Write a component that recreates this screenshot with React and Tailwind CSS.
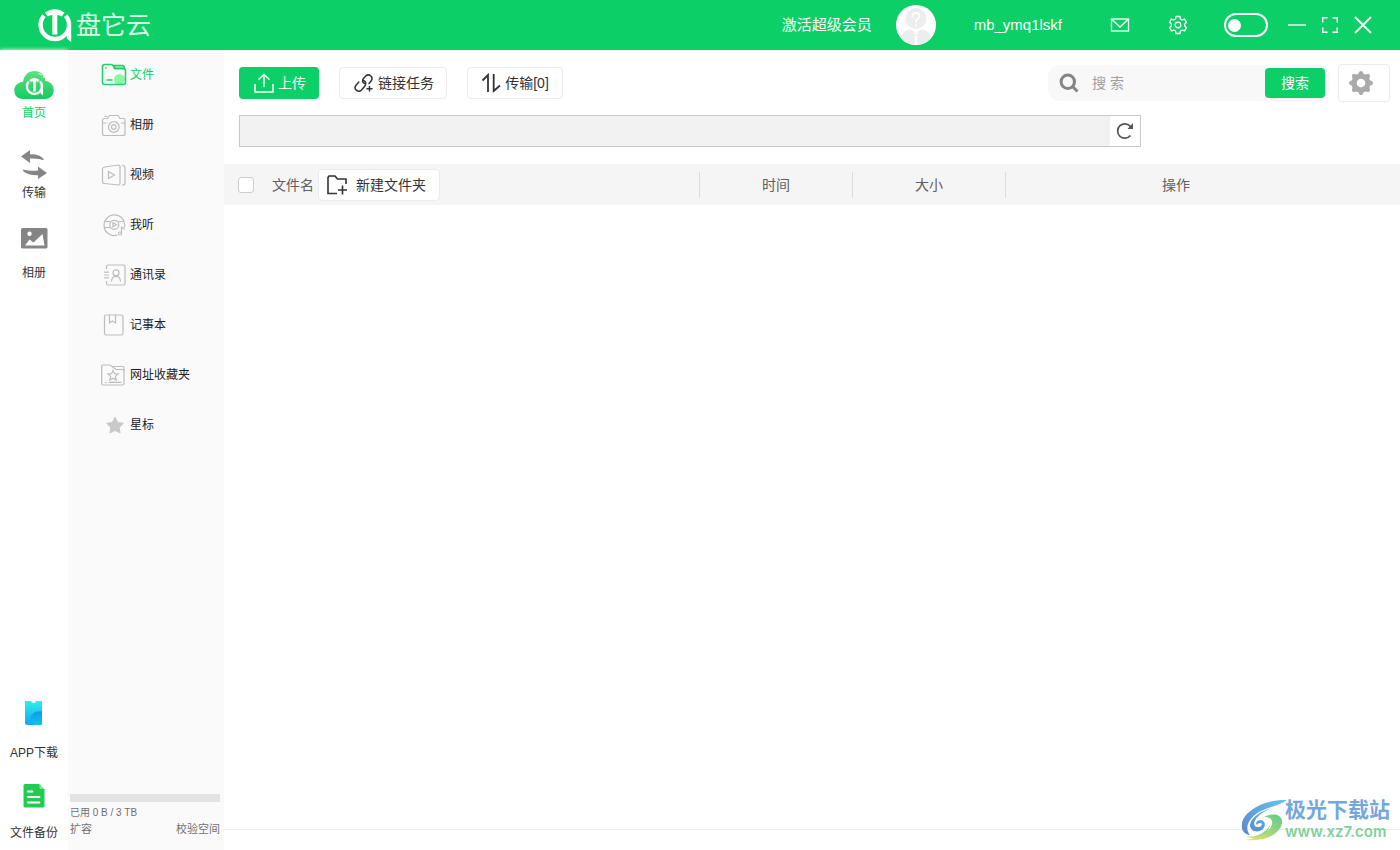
import { useState } from "react";

function LogoMark({ ...props }) {
    return (
        <svg viewBox="0 0 34 34" fill="none" stroke="currentColor" strokeWidth="4.4" aria-hidden="true" {...props}>
            <path d="M6 7.6A14.2 14.2 0 1 0 27.6 7.6" />
            <path d="M7 4.6Q16.8 -2.6 26.6 4.6L23.8 8.6Q21.6 7.2 19.3 6.9V26.5H14.3V6.9Q12 7.2 9.8 8.6Z" fill="currentColor" stroke="none" />
            <path d="M33.2 17V34L28.8 30.4V22Z" fill="currentColor" stroke="none" />
        </svg>
    );
}

const homeIcon = (
    <svg viewBox="0 0 40 40" className="h-10 w-10">
        <defs>
            <linearGradient id="cloud" x1="0" y1="0" x2="0" y2="1">
                <stop offset="0" stopColor="#5fe07c" />
                <stop offset="1" stopColor="#12cc62" />
            </linearGradient>
        </defs>
        <path d="M9.5 34C4 34 0.3 30.5 0.3 25.5C0.3 20.5 4 17.5 9 16.8C10 10 14.5 6 20.5 6C26.5 6 30.5 10 31.5 16C36 16.5 39.7 20 39.7 25C39.7 30.5 36 34 31 34Z" fill="url(#cloud)" />
        <path d="M24.5 8.3Q28 9.5 30 13" stroke="#b9f3c6" strokeWidth="1.3" fill="none" strokeDasharray="4 1.5" />
        <LogoMark x="11.5" y="12.5" width="18" height="18" color="#fff" />
    </svg>
);

const transferIcon = (
    <svg viewBox="0 0 40 40" className="h-10 w-10" fill="#858585">
        <path d="M7 11.5L16 5V9.3Q26 9 30 14.5L29 15.3Q25 13.2 16 13.6V18Z" />
        <path d="M33 28L24 21.5V25.5Q15 26.5 9.5 24.5L9 26Q14 30.5 24 30.2V34Z" />
    </svg>
);

const albumIcon = (
    <svg viewBox="0 0 40 40" className="h-10 w-10">
        <rect x="7" y="3" width="26.5" height="20.5" rx="1.5" fill="#858585" />
        <circle cx="15.5" cy="8.7" r="2.2" fill="#fff" />
        <path d="M11 20.5L15.5 14.5L19.5 17.5L28.5 9L30.5 20.5Z" fill="#fff" />
    </svg>
);

const phoneIcon = (
    <svg viewBox="0 0 40 40" className="h-10 w-10">
        <defs>
            <linearGradient id="phone" x1="0" y1="0" x2="0" y2="1">
                <stop offset="0" stopColor="#2bf0e6" />
                <stop offset="1" stopColor="#12a6f8" />
            </linearGradient>
            <linearGradient id="drop" x1="0" y1="0" x2="0" y2="1">
                <stop offset="0" stopColor="#0d9bea" />
                <stop offset="1" stopColor="#10c4e8" />
            </linearGradient>
        </defs>
        <path d="M11 8H17Q17.5 10 20 10Q21.5 10 22 8H28V30.5Q28 32 26.5 32H13Q11 32 11 30Z" fill="url(#phone)" />
        <path d="M28 18.3C21 17.5 16.5 21 16.5 25.5C16.5 28.5 18 30.5 20.5 32H26.5Q28 32 28 30.5Z" fill="url(#drop)" />
    </svg>
);

const backupIcon = (
    <svg viewBox="0 0 40 40" className="h-10 w-10">
        <path d="M11 11H25L30.5 16.5V33Q30.5 34.5 29 34.5H11Q9.5 34.5 9.5 33V12.5Q9.5 11 11 11Z" fill="#22cc52" />
        <path d="M25.5 11L30.5 16H26.5Q25.5 16 25.5 15Z" fill="#7fe79b" />
        <path d="M14 18.5H18.5M14 24H25.5M14 29.5H25.5" stroke="#fff" strokeWidth="1.8" strokeLinecap="round" />
    </svg>
);

const railTop = [
    { label: "首页", icon: homeIcon, active: true },
    { label: "传输", icon: transferIcon },
    { label: "相册", icon: albumIcon },
];

const railBottom = [
    { label: "APP下载", icon: phoneIcon },
    { label: "文件备份", icon: backupIcon },
];

const categories = [
    {
        label: "文件",
        active: true,
        icon: (
            <>
                <circle cx="18.5" cy="17.5" r="5.5" fill="#8ff5a5" stroke="none" />
                <path d="M12.5 3.5H22Q23.5 4 23.5 6.5H14.5Z" fill="#a9f0bf" />
                <path d="M1.5 5Q1.5 2.5 4 2.5H10Q11.5 2.5 12.2 4L13.5 6.5H22Q24.5 6.5 24.5 9V20.5Q24.5 22.5 22 22.5H4Q1.5 22.5 1.5 20.5Z" />
                <path d="M6 18H11M5 6V5.8" />
            </>
        ),
    },
    {
        label: "相册",
        icon: (
            <>
                <path d="M3.5 6.5H6.5L8.5 3.5H17L19 6.5H22Q24 6.5 24 8.5V21.5Q24 23.5 22 23.5H3.5Q1.5 23.5 1.5 21.5V8.5Q1.5 6.5 3.5 6.5Z" />
                <circle cx="12.8" cy="15" r="5.3" />
                <circle cx="12.8" cy="15" r="2.3" />
                <path d="M1.5 11H5M20.5 11H24M4 4.5H6" />
            </>
        ),
    },
    {
        label: "视频",
        icon: (
            <>
                <path d="M3.5 5L17.5 3Q19 3 19 4.5V21.5Q19 23 17.5 23L3.5 21.5Q1.5 21.5 1.5 19.5V7Q1.5 5.5 3.5 5Z" />
                <path d="M7.5 9.5L13.5 13L7.5 16.5Z" />
                <path d="M21.5 3.5Q24 3.5 24 5.5V21Q24 23 21.5 23" />
            </>
        ),
    },
    {
        label: "我听",
        icon: (
            <>
                <path d="M16 23.2A10.3 10.3 0 1 1 23.5 15" />
                <path d="M4 9.5H9M18 9.5H22.5M3.5 15.5H9" />
                <circle cx="13.3" cy="12.8" r="4.5" />
                <path d="M12 10.8L15.5 12.8L12 14.8Z" />
                <path d="M20.5 21.5V15L23.5 17" />
                <circle cx="19" cy="21.5" r="1.5" />
            </>
        ),
    },
    {
        label: "通讯录",
        icon: (
            <>
                <path d="M5.5 6.5V4.5Q5.5 3 7 3H22.5Q24 3 24 4.5V21.5Q24 23 22.5 23H7Q5.5 23 5.5 21.5V19.5" />
                <path d="M3.5 10.2H7.5M3.5 13H7.5M3.5 15.8H7.5" />
                <circle cx="15" cy="10.8" r="3" />
                <path d="M10.5 19Q11 14.3 15 14.3Q19 14.3 19.5 19" />
            </>
        ),
    },
    {
        label: "记事本",
        icon: (
            <>
                <rect x="3.5" y="3" width="18.5" height="20" rx="1.5" />
                <path d="M8.5 3V11L11.5 9L14.5 11V3" />
            </>
        ),
    },
    {
        label: "网址收藏夹",
        icon: (
            <>
                <path d="M0.7 4.5Q0.7 3 2 3H9L15 7.5H21.5Q23 7.5 23 9V21.5Q23 23 21.5 23H2Q0.7 23 0.7 21.5Z" />
                <path d="M12 4.5H21.5Q23 4.5 23 6V9" />
                <path d="M12 8.5L13.5 11.7L17 12L14.4 14.4L15.2 18L12 16.2L8.8 18L9.6 14.4L7 12L10.5 11.7Z" />
                <path d="M8 20.3H20M4.5 20.3H5" />
            </>
        ),
    },
    {
        label: "星标",
        icon: (
            <path
                d="M14 5.5L16.5 10.5L22 11.3L18 15.2L19 20.8L14 18.2L9 20.8L10 15.2L6 11.3L11.5 10.5Z"
                fill="#c9c9c9"
                stroke="#c9c9c9"
                strokeLinejoin="round"
            />
        ),
    },
];

function RailItem({ item }) {
    return (
        <a href="#" className="flex w-full flex-col items-center">
            {item.icon}
            {item.label}
        </a>
    );
}

function Header() {
    return (
        <header className="flex h-[50px] shrink-0 items-center bg-[#0dcf67] pr-7 pl-[38px] text-[15px] text-white">
            <a href="#" className="flex items-center gap-1" aria-label="盘它云">
                <LogoMark className="h-[34px] w-[34px]" />
                <span className="text-[25px] leading-[34px] text-[#d8fae6]">盘它云</span>
            </a>

            <a href="#" className="ml-auto">激活超级会员</a>
            <svg viewBox="0 0 40 40" className="ml-6 h-10 w-10 rounded-full bg-white" aria-hidden="true">
                <circle cx="20" cy="13.5" r="10.5" fill="#ededed" />
                <path d="M4 40Q4 25 14.5 24.5L20 27.5L25.5 24.5Q36 25 36 40Z" fill="#ededed" />
                <path d="M17.5 26.5L20 28L22.5 26.5L21.5 29.5H18.5ZM19 30.5H21L22 40H18.2Z" fill="#fff" />
                <path d="M16.5 11.5Q16.5 8 20 8Q23.5 8 23.5 11Q23.5 13 21.5 14Q20 15 20 17.5" stroke="#fff" strokeWidth="1.8" fill="none" />
                <circle cx="20" cy="20.5" r="1.1" fill="#fff" />
            </svg>
            <span className="ml-[38px]">mb_ymq1lskf</span>

            <button className="ml-12" aria-label="消息">
                <svg viewBox="0 0 20 20" className="h-5 w-5" fill="none" stroke="currentColor" strokeWidth="1.3">
                    <rect x="1.5" y="4" width="17" height="12" />
                    <path d="M2 4.5L10 12L18 4.5" />
                </svg>
            </button>
            <button className="ml-[38px]" aria-label="设置">
                <svg viewBox="0 0 20 20" className="h-5 w-5" fill="none" stroke="currentColor" strokeWidth="1.3" strokeLinejoin="round">
                    <path d="M8 1.5H12L12.5 4L14.2 5L16.5 4L18.5 7.3L16.7 9V11L18.5 12.7L16.5 16L14.2 15L12.5 16L12 18.5H8L7.5 16L5.8 15L3.5 16L1.5 12.7L3.3 11V9L1.5 7.3L3.5 4L5.8 5L7.5 4Z" />
                    <circle cx="10" cy="10" r="2.8" />
                </svg>
            </button>
            <input
                type="checkbox"
                aria-label="切换模式"
                className="ml-9 flex h-6 w-11 appearance-none items-center rounded-full border-2 border-white px-0.5 before:h-[13px] before:w-[13px] before:rounded-full before:bg-white before:content-['']"
            />
            <button className="ml-5" aria-label="最小化">
                <svg viewBox="0 0 18 18" className="h-[18px] w-[18px]" stroke="currentColor" strokeWidth="1.3">
                    <path d="M0 9H18" />
                </svg>
            </button>
            <button className="ml-4" aria-label="全屏">
                <svg viewBox="0 0 16 16" className="h-4 w-4" fill="none" stroke="currentColor" strokeWidth="1.5">
                    <path d="M0.7 5.5V0.7H5.5M10.5 0.7H15.3V5.5M15.3 10.5V15.3H10.5M5.5 15.3H0.7V10.5" />
                </svg>
            </button>
            <button className="ml-4" aria-label="关闭">
                <svg viewBox="0 0 18 18" className="h-[18px] w-[18px]" stroke="currentColor" strokeWidth="1.8">
                    <path d="M1 1L17 17M17 1L1 17" />
                </svg>
            </button>
        </header>
    );
}

function Sidebar() {
    return (
        <aside className="flex w-[156px] shrink-0 flex-col bg-[#fafafa] text-xs text-[#222222]">
            <nav className="mb-auto">
                {categories.map((c) => (
                    <a
                        key={c.label}
                        href="#"
                        className={c.active ? "flex h-[50px] items-center gap-[3px] pl-[33px] text-[#0dcf67]" : "flex h-[50px] items-center gap-[3px] pl-[33px]"}
                    >
                        <svg
                            viewBox="0 0 26 26"
                            className="h-[26px] w-[26px]"
                            fill="none"
                            stroke={c.active ? "#1fcf6c" : "#bdbdbd"}
                            strokeWidth={c.active ? 1.5 : 1.2}
                            strokeLinecap="round"
                        >
                            {c.icon}
                        </svg>
                        {c.label}
                    </a>
                ))}
            </nav>

            <div className="pr-1 pb-[13px] pl-0.5 text-[11px] leading-4 text-[#707070]">
                <div className="h-2 bg-[#e3e3e3]" role="progressbar" aria-label="已用空间" aria-valuenow={0} />
                <p className="mt-[3px] text-[10px] leading-4">已用 0 B / 3 TB</p>
                <div className="flex justify-between">
                    <a href="#">扩容</a>
                    <a href="#">校验空间</a>
                </div>
            </div>
        </aside>
    );
}

function Toolbar() {
    const [query, setQuery] = useState("");

    return (
        <div className="flex items-center gap-5 pr-[10px] pl-[15px] text-sm text-[#333333]">
            <button className="flex h-8 w-20 items-center justify-center gap-1 rounded bg-[#0dcf67] pl-0.5 text-white">
                <svg viewBox="0 0 20 20" className="h-5 w-5" fill="none" stroke="currentColor" strokeWidth="1.5">
                    <path d="M1 11V19H19V11M10 14V1.5M4.5 6.5L10 1.5L15.5 6.5" />
                </svg>
                上传
            </button>
            <button className="flex h-8 w-[108px] items-center justify-center gap-1 rounded border border-[#ebebeb] bg-white pl-0.5">
                <svg viewBox="0 0 20 20" className="h-5 w-5" fill="none" stroke="currentColor" strokeWidth="1.5" strokeLinecap="round">
                    <path d="M10.5 10.5C8 9.5 8.3 7 9.5 5.5L12 2.7C15 0.5 19.5 3.5 17.5 7.5L15 10.5" />
                    <path d="M9.5 7.5C12.5 8.5 12.2 11.5 10.5 13.5L7.5 17C4.5 20 -1 16.5 2 12.2L4.8 9" />
                    <path d="M15.5 13.5V18M13 15.7H18" />
                </svg>
                链接任务
            </button>
            <button className="flex h-8 w-24 items-center justify-center gap-1 rounded border border-[#ebebeb] bg-white">
                <svg viewBox="0 0 20 20" className="h-5 w-5" fill="none" stroke="currentColor" strokeWidth="1.8">
                    <path d="M1.5 7.5L7 2V19M12.7 1V18L19 12.5" />
                </svg>
                传输[0]
            </button>

            <form
                className="ml-auto flex h-9 w-[282px] items-center rounded-xl bg-[#f8f8f8] pr-[5px] pl-[11px]"
                onSubmit={(e) => e.preventDefault()}
            >
                <svg viewBox="0 0 20 20" className="h-5 w-5 shrink-0" fill="none" stroke="#858585" strokeWidth="3">
                    <circle cx="8.8" cy="8.8" r="6.7" />
                    <path d="M13.5 13.5L18.5 18.5" />
                </svg>
                <input
                    type="text"
                    aria-label="搜索"
                    placeholder="搜 索"
                    value={query}
                    onChange={(e) => setQuery(e.target.value)}
                    className="ml-[13px] min-w-0 flex-1 bg-transparent outline-none placeholder:text-[#a0a0a0]"
                />
                <button className="h-[30px] w-[60px] rounded bg-[#0dcf67] text-white">搜索</button>
            </form>
            <button
                className="-ml-3 flex h-[38px] w-[52px] items-center rounded border border-[#ebebeb] pl-[9px]"
                aria-label="列表设置"
            >
                <svg viewBox="0 0 26 26" className="h-[26px] w-[26px]">
                    <g fill="#aaaaaa">
                        <circle cx="13" cy="13" r="9.5" />
                        {[0, 45, 90, 135, 180, 225, 270, 315].map((deg) => (
                            <path key={deg} d="M9.8 5L11.5 1.5Q13 0.5 14.5 1.5L16.2 5Z" transform={`rotate(${deg} 13 13)`} />
                        ))}
                    </g>
                    <circle cx="13" cy="13" r="4.3" fill="#fff" />
                </svg>
            </button>
        </div>
    );
}

function FileTable() {
    return (
        <table className="mt-[17px] w-full table-fixed text-sm text-[#606060]">
            <thead>
                <tr className="h-[41px] bg-[#f5f5f5]">
                    <th className="p-0 font-normal">
                        <div className="flex items-center pl-[14px]">
                            <input
                                type="checkbox"
                                aria-label="全选"
                                className="h-4 w-4 appearance-none rounded-[3px] border border-[#cccccc] bg-white checked:bg-[#0dcf67]"
                            />
                            <span className="ml-[18px]">文件名</span>
                            <button className="ml-1 flex h-8 w-[122px] items-center gap-2 rounded border border-[#ebebeb] bg-white pl-[7px] text-[#333333]">
                                <svg viewBox="0 0 22 22" className="h-[22px] w-[22px]" fill="none" stroke="currentColor" strokeWidth="1.6">
                                    <path d="M11 19.5H2V3.5L3 2H9L11.5 5H20V10" />
                                    <path d="M16.5 11.5V20.5M12 16H21" />
                                </svg>
                                新建文件夹
                            </button>
                        </div>
                    </th>
                    <th className="w-[153px] p-0 font-normal">
                        <div className="border-l border-[#dcdcdc] leading-[26px]">时间</div>
                    </th>
                    <th className="w-[153px] p-0 font-normal">
                        <div className="border-l border-[#dcdcdc] leading-[26px]">大小</div>
                    </th>
                    <th className="w-[395px] p-0 font-normal">
                        <div className="border-l border-[#dcdcdc] pr-[54px] leading-[26px]">操作</div>
                    </th>
                </tr>
            </thead>
            <tbody />
        </table>
    );
}

function SiteMark() {
    return (
        <div className="absolute right-[10px] bottom-2 flex items-center">
            <svg viewBox="0 0 46 42" className="h-[42px] w-[46px]" fill="none">
                <defs>
                    <linearGradient id="swirlBlue" x1="0" y1="1" x2="1" y2="0">
                        <stop offset="0" stopColor="#5c86cf" />
                        <stop offset="1" stopColor="#63c3ee" />
                    </linearGradient>
                    <linearGradient id="swirlGreen" x1="0" y1="1" x2="1" y2="0">
                        <stop offset="0" stopColor="#f0e36a" />
                        <stop offset="0.6" stopColor="#8fd67f" />
                        <stop offset="1" stopColor="#62c98a" />
                    </linearGradient>
                </defs>
                <path d="M46 1C25 0 2 12 1 25C0 31 3 35 9 36C4 30 6 22 15 15C24 8 36 8 46 1Z" fill="url(#swirlBlue)" />
                <path d="M31 9C20 12 10 18 9 26C9 32 16 34 21 31C25 28 25 22 20 21C16 21 14 24 16 26C17 24 20 23 21 25C21 28 16 29 14 27C11 23 16 15 31 9Z" fill="url(#swirlBlue)" />
                <path d="M23 18C33 13 42 16 41 24C40 33 27 43 5 41C18 39 30 32 31 25C32 20 28 18 23 18Z" fill="url(#swirlGreen)" />
                <path d="M5 37C15 39 25 34 29 26C27 36 15 43 5 37Z" fill="url(#swirlGreen)" />
            </svg>
            <div className="-ml-0.5">
                <p className="text-[21px] leading-6 font-bold text-[#74a7dc]">极光下载站</p>
                <p className="font-['Inter',sans-serif] text-[15px] leading-5 font-semibold text-[#7fd09a]">www.xz7.com</p>
            </div>
        </div>
    );
}

export default function App() {
    return (
        <div className="relative flex h-screen flex-col overflow-hidden bg-white font-['Liberation_Sans','Noto_Sans_CJK_SC',sans-serif]">
            <Header />
            <div className="flex min-h-0 flex-1">
                <div className="flex w-[68px] shrink-0 flex-col justify-between bg-white pt-[15px] pb-[9px] text-xs leading-4 text-[#333333] shadow-[0_0_4px_#ffffff]">
                    <nav className="flex flex-col gap-6">
                        {railTop.map((item) => (
                            <div key={item.label} className={item.active ? "text-[#0dcf67]" : ""}>
                                <RailItem item={item} />
                            </div>
                        ))}
                    </nav>
                    <nav className="flex flex-col gap-3">
                        {railBottom.map((item) => (
                            <div key={item.label} className="[&_a]:gap-3">
                                <RailItem item={item} />
                            </div>
                        ))}
                    </nav>
                </div>

                <Sidebar />

                <main className="flex min-w-0 flex-1 flex-col pt-[14px]">
                    <Toolbar />
                    <div className="mt-[13px] mr-[259px] ml-[15px] flex h-8 border border-[#c8c8c8]">
                        <input type="text" readOnly aria-label="当前路径" className="min-w-0 flex-1 bg-[#f2f2f2] px-2 text-sm outline-none" />
                        <button className="flex w-[30px] items-center justify-center" aria-label="刷新">
                            <svg viewBox="0 0 18 18" className="h-[18px] w-[18px]" fill="none" stroke="#555555" strokeWidth="1.7">
                                <path d="M14.5 4.5A7.2 7.2 0 1 0 14.5 13.5" />
                                <path d="M17 1V7H11.5Z" fill="#555555" stroke="none" />
                            </svg>
                        </button>
                    </div>
                    <FileTable />
                    <footer className="mt-auto h-[21px] border-t border-[#ebebeb]" />
                </main>
            </div>
            <SiteMark />
        </div>
    );
}
